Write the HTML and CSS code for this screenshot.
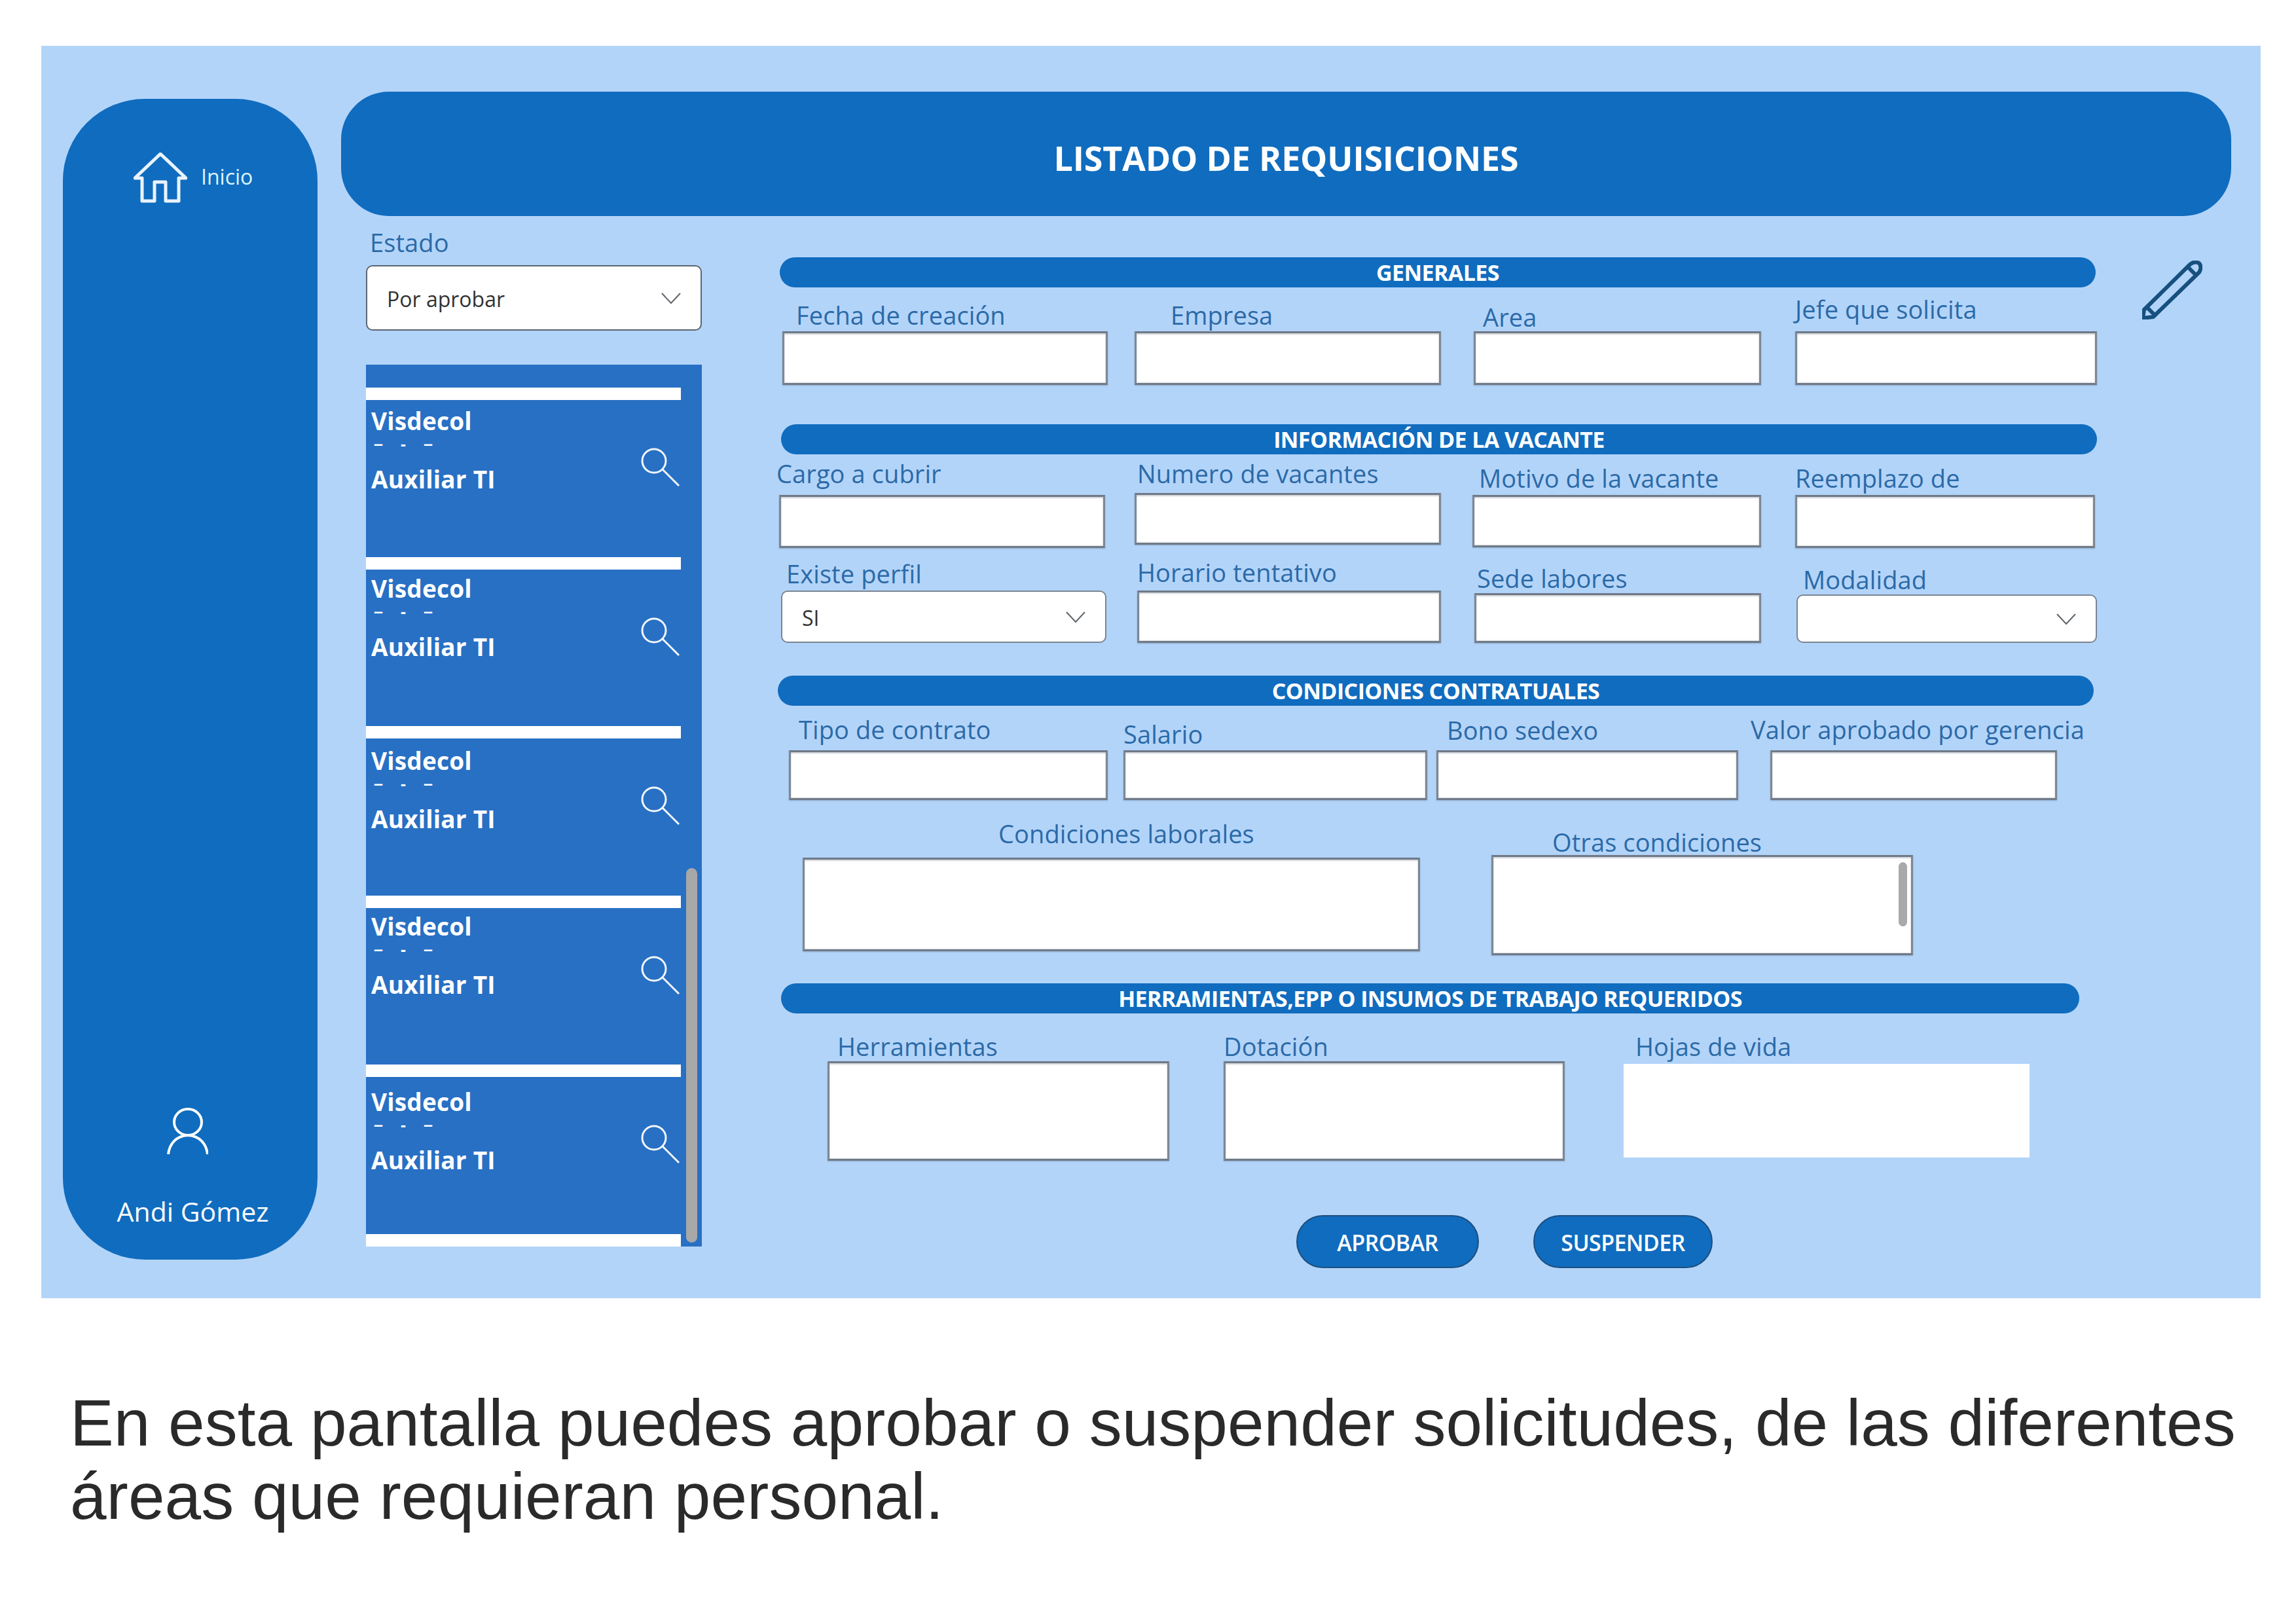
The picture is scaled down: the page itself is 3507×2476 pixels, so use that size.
FILE: index.html
```html
<!DOCTYPE html>
<html lang="es">
<head>
<meta charset="utf-8">
<title>Listado de requisiciones</title>
<link rel="stylesheet" href="styles.css">
</head>
<body>
<main class="panel">
  <aside class="sidebar">
    <a class="home">
      <svg class="home-icon" viewBox="0 0 82 78"><path d="M2 39 L41 2 L80 39 L69 39 L69 74 L49 74 L49 45 L32 45 L32 74 L13 74 L13 39 Z"/></svg>
      <span class="home-text">Inicio</span>
    </a>
    <div class="user">
      <svg class="user-icon" viewBox="0 0 63 72"><ellipse cx="32" cy="22" rx="21" ry="20"/><path d="M2 71 C4 55 14 43 32 42 C50 43 60 55 62 71"/></svg>
      <span class="user-name">Andi Gómez</span>
    </div>
  </aside>
  <div class="content">
    <header class="title-bar"><h1>LISTADO DE REQUISICIONES</h1></header>
    <div class="workspace">
      <section class="list-col">
        <label class="label estado-label">Estado</label>
        <div class="select estado-select"><span>Por aprobar</span><svg class="chev" viewBox="0 0 30 18"><path d="M1 1 L15 16 L29 1"/></svg></div>
        <div class="list">
          <div class="sep"></div>
          <article class="card"><div class="card-text"><b>Visdecol</b><i>– - –</i><b>Auxiliar TI</b></div><svg class="search" viewBox="0 0 60 60"><circle cx="20" cy="20" r="18"/><path d="M33 33 L58 58"/></svg></article>
          <div class="sep"></div>
          <article class="card card-b"><div class="card-text"><b>Visdecol</b><i>– - –</i><b>Auxiliar TI</b></div><svg class="search" viewBox="0 0 60 60"><circle cx="20" cy="20" r="18"/><path d="M33 33 L58 58"/></svg></article>
          <div class="sep"></div>
          <article class="card card-c"><div class="card-text"><b>Visdecol</b><i>– - –</i><b>Auxiliar TI</b></div><svg class="search" viewBox="0 0 60 60"><circle cx="20" cy="20" r="18"/><path d="M33 33 L58 58"/></svg></article>
          <div class="sep"></div>
          <article class="card card-d"><div class="card-text"><b>Visdecol</b><i>– - –</i><b>Auxiliar TI</b></div><svg class="search" viewBox="0 0 60 60"><circle cx="20" cy="20" r="18"/><path d="M33 33 L58 58"/></svg></article>
          <div class="sep"></div>
          <article class="card card-e"><div class="card-text"><b>Visdecol</b><i>– - –</i><b>Auxiliar TI</b></div><svg class="search" viewBox="0 0 60 60"><circle cx="20" cy="20" r="18"/><path d="M33 33 L58 58"/></svg></article>
          <div class="sep"></div>
          <div class="list-thumb"></div>
        </div>
      </section>

      <section class="form">
        <h2 class="bar bar-1">GENERALES</h2>
        <div class="row row-1">
          <div class="field f-fecha"><label class="label">Fecha de creación</label><div class="box"></div></div>
          <div class="field f-empresa"><label class="label">Empresa</label><div class="box"></div></div>
          <div class="field f-area"><label class="label">Area</label><div class="box"></div></div>
          <div class="field f-jefe"><label class="label">Jefe que solicita</label><div class="box"></div></div>
        </div>

        <h2 class="bar bar-2">INFORMACIÓN DE LA VACANTE</h2>
        <div class="row row-2">
          <div class="field f-cargo"><label class="label">Cargo a cubrir</label><div class="box"></div></div>
          <div class="field f-numero"><label class="label">Numero de vacantes</label><div class="box"></div></div>
          <div class="field f-motivo"><label class="label">Motivo de la vacante</label><div class="box"></div></div>
          <div class="field f-reemplazo"><label class="label">Reemplazo de</label><div class="box"></div></div>
        </div>
        <div class="row row-3">
          <div class="field f-existe"><label class="label">Existe perfil</label><div class="select"><span>SI</span><svg class="chev" viewBox="0 0 30 18"><path d="M1 1 L15 16 L29 1"/></svg></div></div>
          <div class="field f-horario"><label class="label">Horario tentativo</label><div class="box"></div></div>
          <div class="field f-sede"><label class="label">Sede labores</label><div class="box"></div></div>
          <div class="field f-modalidad"><label class="label">Modalidad</label><div class="select"><span></span><svg class="chev" viewBox="0 0 30 18"><path d="M1 1 L15 16 L29 1"/></svg></div></div>
        </div>

        <h2 class="bar bar-3">CONDICIONES CONTRATUALES</h2>
        <div class="row row-4">
          <div class="field f-tipo"><label class="label">Tipo de contrato</label><div class="box"></div></div>
          <div class="field f-salario"><label class="label">Salario</label><div class="box"></div></div>
          <div class="field f-bono"><label class="label">Bono sedexo</label><div class="box"></div></div>
          <div class="field f-valor"><label class="label">Valor aprobado por gerencia</label><div class="box"></div></div>
        </div>
        <div class="row row-5">
          <div class="field f-condiciones"><label class="label">Condiciones laborales</label><div class="box"></div></div>
          <div class="field f-otras"><label class="label">Otras condiciones</label><div class="box box-scroll"><div class="box-thumb"></div></div></div>
        </div>

        <h2 class="bar bar-4">HERRAMIENTAS,EPP O INSUMOS DE TRABAJO REQUERIDOS</h2>
        <div class="row row-6">
          <div class="field f-herramientas"><label class="label">Herramientas</label><div class="box"></div></div>
          <div class="field f-dotacion"><label class="label">Dotación</label><div class="box"></div></div>
          <div class="field f-hojas"><label class="label">Hojas de vida</label><div class="box box-plain"></div></div>
        </div>

        <div class="actions">
          <button class="btn btn-approve">APROBAR</button>
          <button class="btn btn-suspend">SUSPENDER</button>
        </div>
      </section>

      <svg class="pencil" viewBox="0 0 92 90"><path d="M1 88 L3 75 L73 6 Q80 0 87 4 Q92 10 87 18 L17 86 Z"/><path d="M70 10 L82 22 M7 71 L19 83"/></svg>
    </div>
  </div>
</main>
<p class="caption">En esta pantalla puedes aprobar o suspender solicitudes, de las diferentes áreas que requieran personal.</p>
</body>
</html>
```
FILE: styles.css
```css
* { box-sizing: border-box; }
html, body { margin: 0; padding: 0; background: #fff; }
body { width: 3507px; height: 2476px; overflow: hidden; padding: 70px 0 0 63px; font-family: "Open Sans", "Noto Sans", sans-serif; }

.panel { width: 3390px; height: 1913px; background: #b3d4f9; display: flex; align-items: flex-start; padding: 70px 45px 0 33px; }

/* Sidebar */
.sidebar { width: 389px; height: 1773px; margin-top: 11px; flex: none; background: #106cbe; border-radius: 125px; display: flex; flex-direction: column; justify-content: space-between; color: #fff; }
.home { display: flex; align-items: flex-start; margin: 82px 0 0 108px; }
.home-icon { width: 82px; height: 78px; fill: none; stroke: #eaf3fb; stroke-width: 5; stroke-linejoin: round; }
.home-text { margin: 18px 0 0 21px; font-size: 32px; line-height: 38px; font-weight: 500; color: #d8f4ff; }
.user { display: flex; flex-direction: column; align-items: center; padding-bottom: 54px; }
.user-icon { width: 63px; height: 72px; margin-right: 8px; fill: none; stroke: #fff; stroke-width: 4; }
.user-name { margin: 66px 0 0 8px; font-size: 41px; line-height: 40px; white-space: nowrap; }

/* Content */
.content { width: 2887px; margin-left: 36px; flex: none; }
.title-bar { height: 190px; padding-top: 10px; background: #106cbe; border-radius: 73px; display: flex; align-items: center; justify-content: center; }
.title-bar h1 { margin: 0; color: #fff; font-size: 52px; font-weight: 700; letter-spacing: -0.2px; }
.workspace { display: flex; align-items: flex-start; }

.label { display: block; font-size: 38px; line-height: 40px; font-weight: 500; letter-spacing: 0.1px; color: #2b6aa7; white-space: nowrap; }

/* List column */
.list-col { width: 513px; margin-left: 38px; flex: none; padding-top: 20px; }
.estado-label { margin: 0 0 15px 6px; }
.select { background: #fff; border: 2px solid #7a8592; border-radius: 10px; display: flex; align-items: center; justify-content: space-between; padding: 2px 30px 0 30px; font-size: 32px; color: #333; }
.estado-select { height: 100px; border-color: #5b6670; }
.chev { width: 30px; height: 18px; fill: none; stroke: #60666c; stroke-width: 2; flex: none; }

.list { position: relative; height: 1347px; margin-top: 52px; padding-top: 35px; background: #2870c4; overflow: hidden; }
.sep { width: 481px; height: 19px; background: #fff; }
.card { width: 481px; height: 239.6px; display: flex; justify-content: space-between; align-items: flex-start; color: #fff; padding-left: 8px; padding-right: 1px; }
.card-text { display: flex; flex-direction: column; padding-top: 12px; }
.card-b .card-text { padding-top: 9px; }
.card-c .card-text { padding-top: 14px; }
.card-d .card-text { padding-top: 8px; }
.card-e .card-text { padding-top: 18px; }
.card-text b { font-size: 37px; line-height: 40px; font-weight: 700; letter-spacing: 0.2px; white-space: nowrap; }
.card-text i { font-family: "Liberation Sans", Arial, sans-serif; font-style: normal; font-weight: 700; font-size: 25px; line-height: 30px; margin: 0 0 19px 4px; letter-spacing: 10px; white-space: nowrap; }
.search { width: 60px; height: 60px; margin-top: 73px; flex: none; fill: none; stroke: #f2f7fc; stroke-width: 3; }
.list-thumb { position: absolute; left: 489px; top: 769px; width: 17px; height: 572px; border-radius: 9px; background: #a8a8a8; }

/* Form */
.form { width: 2017px; margin-left: 114px; flex: none; padding-top: 63px; }
.bar { height: 46px; margin: 0; background: #106cbe; border-radius: 23px; display: flex; align-items: center; justify-content: center; color: #fff; font-size: 34px; line-height: 46px; font-weight: 700; letter-spacing: -0.6px; white-space: nowrap; }
.bar-1 { width: 2010px; margin-left: 5px; }
.bar-2 { width: 2010px; margin: 60px 0 0 7px; }
.bar-3 { width: 2010px; margin: 50px 0 0 2px; }
.bar-4 { width: 1983px; margin: 43px 0 0 7px; }

.row { display: flex; align-items: flex-end; }
.row-1 { margin-top: 13px; }
.row-2 { margin-top: 9px; }
.row-3 { margin-top: 17px; }
.row-4 { margin-top: 16px; }
.row-5 { margin-top: 31px; }
.row-6 { margin-top: 30px; }

.field { flex: none; }
.box { background: #fff; border: 3px solid #7d8894; border-top-color: #6f7a87; border-bottom-color: #6f7a87; box-shadow: 0 1px 2px rgba(70,90,115,.35), inset 0 2px 2px rgba(120,130,145,.35), inset 0 -1px 2px rgba(120,130,145,.25); }
.box-plain { border: 0; box-shadow: none; }
.box-scroll { position: relative; }
.box-thumb { position: absolute; right: 6px; top: 8px; width: 13px; height: 98px; border-radius: 7px; background: #a9a9a9; }

.field .label { margin-bottom: var(--gap); margin-left: var(--lx); }
.field .box, .field .select { height: var(--h); }

.f-fecha { width: 497px; margin-left: 9px; --lx: 21px; --gap: 5px; --h: 82px; }
.f-empresa { width: 468px; margin-left: 41px; --lx: 55px; --gap: 5px; --h: 82px; }
.f-area { width: 439px; margin-left: 50px; --lx: 14px; --gap: 2px; --h: 82px; }
.f-jefe { width: 461px; margin-left: 52px; --lx: 0px; --gap: 14px; --h: 82px; }

.f-cargo { width: 498px; margin-left: 4px; --lx: -4px; --gap: 13px; --h: 81px; }
.f-numero { width: 468px; margin-left: 45px; margin-bottom: 5px; --lx: 4px; --gap: 10px; --h: 79px; }
.f-motivo { width: 441px; margin-left: 48px; margin-bottom: 1px; --lx: 10px; --gap: 6px; --h: 80px; }
.f-reemplazo { width: 458px; margin-left: 52px; --lx: 0px; --gap: 6px; --h: 81px; }

.f-existe { width: 497px; margin-left: 7px; --lx: 8px; --gap: 6px; --h: 80px; }
.f-horario { width: 464px; margin-left: 47px; --lx: 0px; --gap: 8px; --h: 80px; }
.f-sede { width: 438px; margin-left: 51px; --lx: 4px; --gap: 3px; --h: 76px; }
.f-modalidad { width: 459px; margin-left: 54px; --lx: 10px; --gap: 3px; --h: 74px; }

.f-tipo { width: 487px; margin-left: 19px; --lx: 15px; --gap: 12px; --h: 76px; }
.f-salario { width: 464px; margin-left: 24px; --lx: 0px; --gap: 5px; --h: 76px; }
.f-bono { width: 461px; margin-left: 14px; --lx: 16px; --gap: 11px; --h: 76px; }
.f-valor { width: 438px; margin-left: 49px; --lx: -30px; --gap: 12px; --h: 76px; }

.f-condiciones { width: 943px; margin-left: 40px; margin-bottom: 6px; --lx: 299px; --gap: 17px; --h: 143px; }
.f-otras { width: 644px; margin-left: 109px; --lx: 93px; --gap: 0px; --h: 153px; }

.f-herramientas { width: 522px; margin-left: 78px; --lx: 15px; --gap: 3px; --h: 152px; }
.f-dotacion { width: 521px; margin-left: 83px; --lx: 0px; --gap: 3px; --h: 152px; }
.f-hojas { width: 620px; margin-left: 90px; margin-bottom: 5px; --lx: 18px; --gap: 7px; --h: 143px; }

.actions { display: flex; gap: 83px; margin: 83px 0 0 794px; }
.btn { height: 81px; padding: 2px 0 0; background: #106cbe; border: 2px solid #1d4f7f; border-radius: 41px; color: #fff; font-family: inherit; font-size: 34px; font-weight: 600; letter-spacing: -0.6px; }
.btn-approve { width: 279px; }
.btn-suspend { width: 274px; }

.pencil { width: 92px; height: 90px; margin: 68px 0 0 69px; flex: none; fill: none; stroke: #17507f; stroke-width: 6; stroke-linejoin: round; }

.caption { width: 3340px; margin: 134px 0 0 44px; font-family: "Liberation Sans", Arial, sans-serif; font-size: 100px; line-height: 112px; color: #2a2a2a; }
```
